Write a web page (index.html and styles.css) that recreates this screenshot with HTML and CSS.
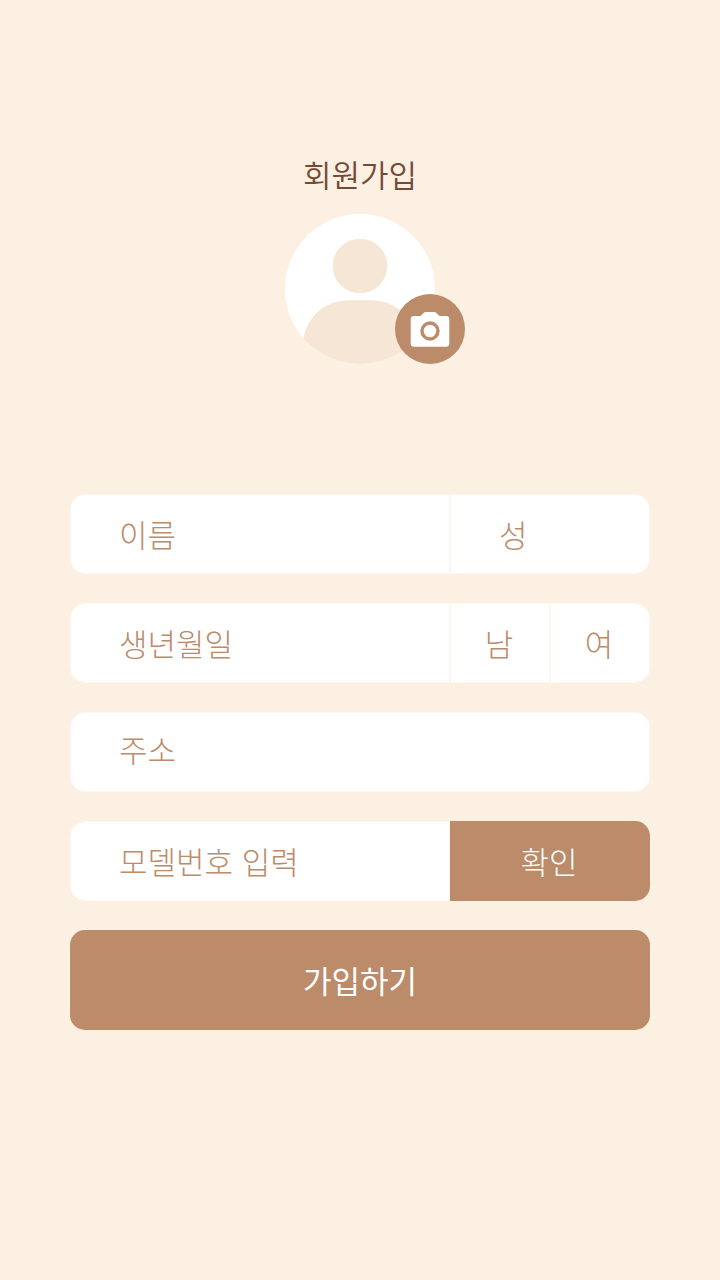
FILE: index.html
```html
<!DOCTYPE html>
<html lang="ko">
<head>
<meta charset="utf-8">
<meta name="viewport" content="width=device-width, initial-scale=1">
<title>회원가입</title>
<link rel="stylesheet" href="styles.css">
</head>
<body>
<main class="signup">
  <h1 class="title">회원가입</h1>
  <div class="profile">
    <svg class="avatar" viewBox="0 0 150 150" aria-hidden="true">
      <defs><clipPath id="round"><circle cx="75" cy="75" r="75"/></clipPath></defs>
      <circle cx="75" cy="75" r="75" fill="#fff"/>
      <g clip-path="url(#round)" fill="#f6e6d5">
        <circle cx="75" cy="52" r="27.3"/>
        <path d="M18 150V132C18 106 38 86.300 64 86.300H86C112 86.300 132 106 132 132V150Z"/>
      </g>
    </svg>
    <button class="camera" type="button" aria-label="사진 선택">
      <svg class="camera-icon" viewBox="0 0 40 36" aria-hidden="true">
        <path fill="#fff" d="M4 5H10.500L13.500 2Q14.500 1 16 1H24Q25.500 1 26.500 2L29.500 5H36Q39.300 5 39.300 8V32.800Q39.300 35.800 36 35.800H4Q.7 35.800 .7 32.800V8Q.7 5 4 5Z"/>
        <circle cx="20" cy="20" r="8" fill="#fff" stroke="#bc8b6a" stroke-width="3.400"/>
      </svg>
    </button>
  </div>
  <form class="form">
    <div class="row name">
      <input class="cell field" type="text" placeholder="이름" aria-label="이름">
      <input class="cell field" type="text" placeholder="성" aria-label="성">
    </div>
    <div class="row birth">
      <input class="cell field" type="text" placeholder="생년월일" aria-label="생년월일">
      <label class="cell option"><input class="radio" type="radio" name="gender" value="m">남</label>
      <label class="cell option"><input class="radio" type="radio" name="gender" value="f">여</label>
    </div>
    <div class="row">
      <input class="cell field address" type="text" placeholder="주소" aria-label="주소">
    </div>
    <div class="row model">
      <input class="cell field" type="text" placeholder="모델번호 입력" aria-label="모델번호 입력">
      <button class="confirm" type="button">확인</button>
    </div>
    <button class="submit" type="submit">가입하기</button>
  </form>
</main>
</body>
</html>
```
FILE: styles.css
```css
* { box-sizing: border-box; }

body {
  margin: 0;
  min-height: 100vh;
  background: #fcf0e2;
  font-family: "Noto Sans CJK KR", sans-serif;
  font-size: 31px;
  font-weight: 300;
  color: #bc8b6a;
}

.signup {
  display: flex;
  flex-direction: column;
  align-items: center;
  padding: 152px 70px 80px;
}

.title {
  margin: 0 0 18px;
  font-family: "Noto Sans CJK KR DemiLight", "Noto Sans CJK KR", sans-serif;
  font-size: 31px;
  font-weight: 350;
  line-height: 44px;
  color: #744a37;
}

.profile {
  position: relative;
  width: 150px;
  height: 150px;
}

.avatar { display: block; width: 100%; height: 100%; }

.camera {
  position: absolute;
  right: -30px;
  bottom: 0;
  display: grid;
  place-items: center;
  width: 70px;
  height: 70px;
  padding: 0;
  border: 0;
  border-radius: 50%;
  background: #bc8b6a;
}

.camera-icon { display: block; width: 40px; height: 36px; }

.form {
  display: grid;
  gap: 29px;
  width: 100%;
  margin-top: 130px;
}

.row {
  display: grid;
  height: 80px;
}

.name,
.model { grid-template-columns: 19fr 10fr; }

.birth { grid-template-columns: 19fr 5fr 5fr; }

.cell {
  min-width: 0;
  border: 1px solid #fef7f0;
  border-radius: 0;
  background: #fff;
}

.cell:first-child { border-radius: 15px 0 0 15px; }
.cell:last-child { border-radius: 0 15px 15px 0; }
.cell:only-child { border-radius: 15px; }

.field {
  width: 100%;
  padding: 0 48px 2px;
  font: inherit;
  color: inherit;
}

.field::placeholder { color: #bc8b6a; opacity: 1; }

.address { padding-bottom: 8px; }

.option {
  display: flex;
  align-items: center;
  justify-content: center;
  padding: 0 2px 2px 0;
}

.radio {
  appearance: none;
  position: absolute;
  margin: 0;
}

.confirm,
.submit {
  padding: 0 2px 2px 0;
  border: 0;
  background: #bc8b6a;
  color: #fff;
  font: inherit;
}

.confirm { border-radius: 0 15px 15px 0; }

.submit {
  height: 100px;
  padding-right: 0;
  border-radius: 15px;
  font-weight: 400;
}
```
